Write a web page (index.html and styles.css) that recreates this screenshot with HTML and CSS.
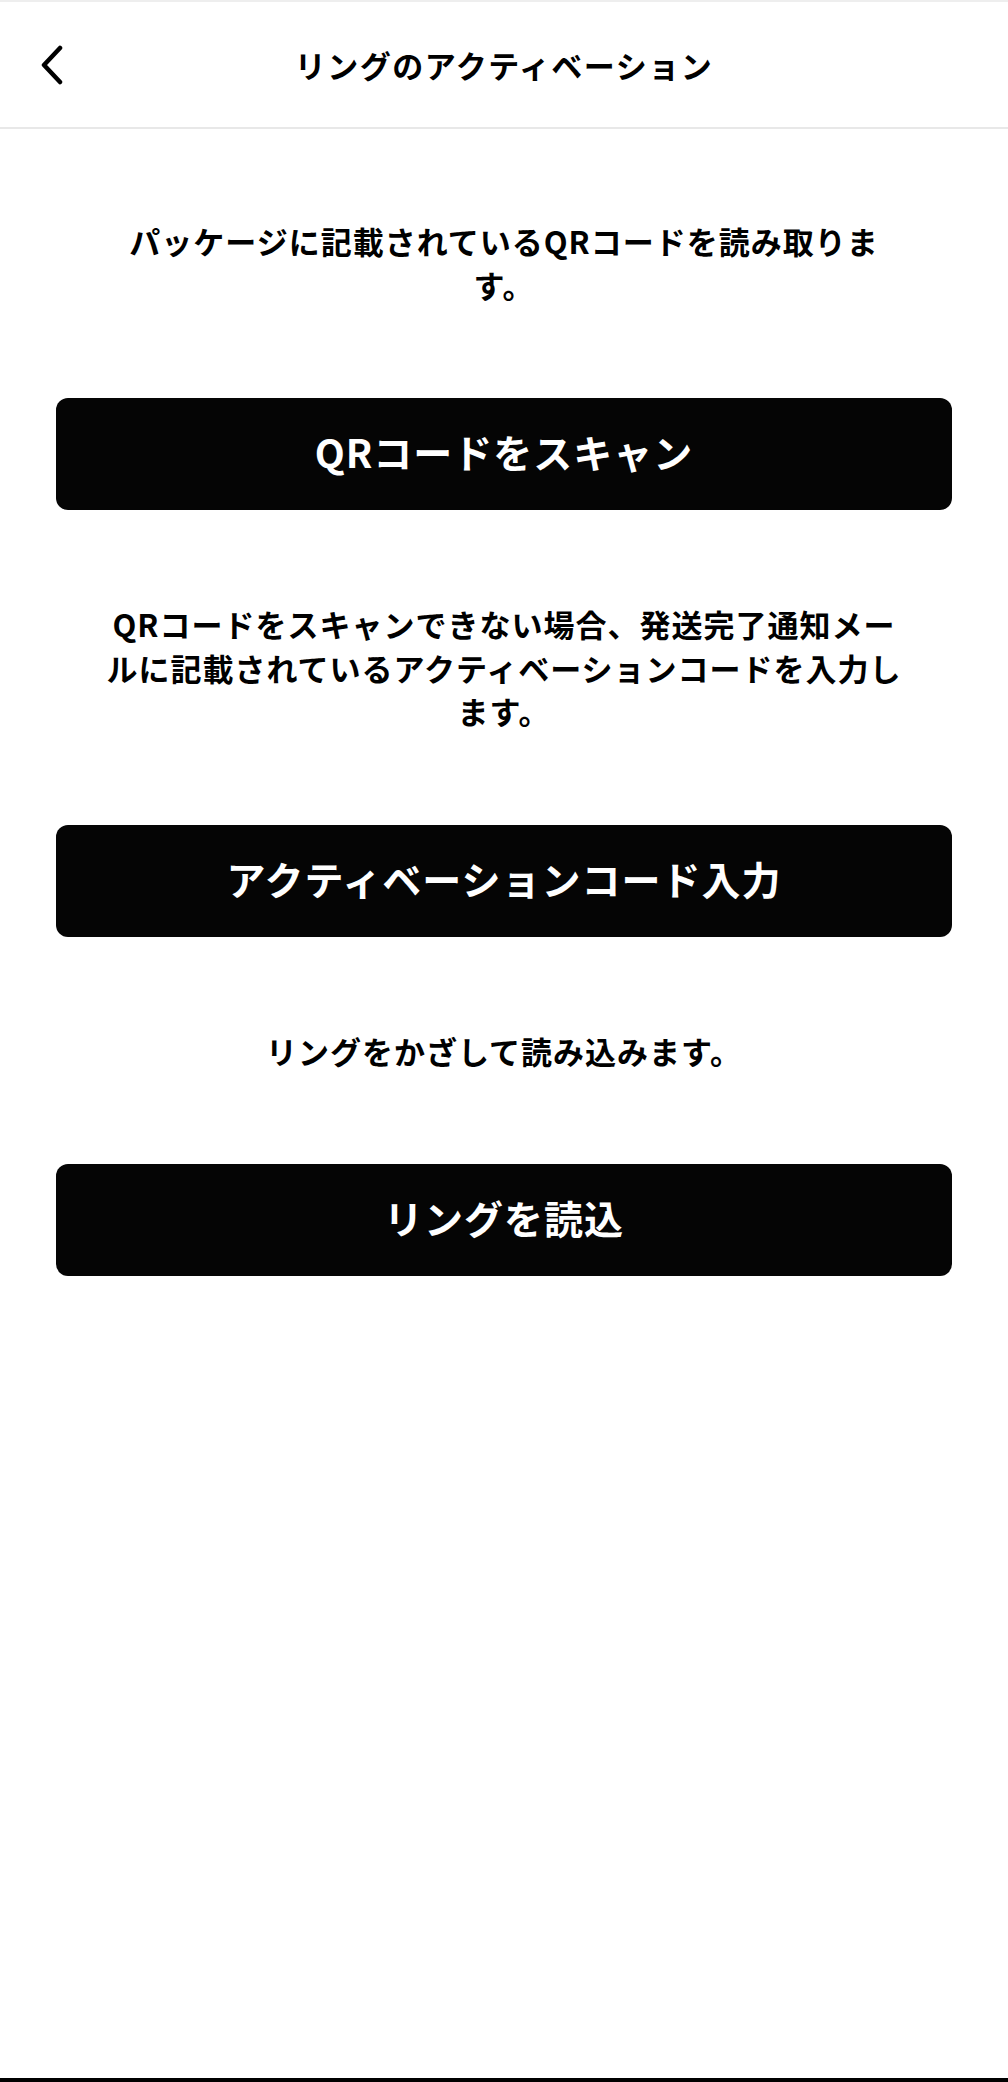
FILE: index.html
```html
<!DOCTYPE html>
<html lang="ja">
<head>
    <meta charset="UTF-8">
    <meta name="viewport" content="width=device-width, initial-scale=1.0">
    <title>リングのアクティベーション</title>
    <link rel="stylesheet" href="styles.css">
</head>
<body>
    <div class="page">
        <header class="header">
            <button class="back-button" aria-label="戻る">
                <svg width="24" height="40" viewBox="0 0 24 40">
                    <polyline points="20,3 4,20 20,37" fill="none" stroke="#000" stroke-width="4.5" stroke-linecap="round" stroke-linejoin="round"/>
                </svg>
            </button>
            <h1 class="title">リングのアクティベーション</h1>
            <span></span>
        </header>

        <main class="content">
            <p class="note">パッケージに記載されているQRコードを読み取ります。</p>
            <button class="action">QRコードをスキャン</button>

            <p class="note">QRコードをスキャンできない場合、発送完了通知メールに記載されているアクティベーションコードを入力します。</p>
            <button class="action">アクティベーションコード入力</button>

            <p class="note">リングをかざして読み込みます。</p>
            <button class="action">リングを読込</button>
        </main>

        <div class="bottom-bar"></div>
    </div>
</body>
</html>
```

FILE: styles.css
```css
/* リング アクティベーション画面 */
html, body {
    margin: 0;
    padding: 0;
}
body {
    font-family: "Noto Sans CJK JP", "Noto Sans", sans-serif;
    background-color: #fff;
    color: #000;
}
.page {
    display: flex;
    flex-direction: column;
    height: 100vh;
}
.header {
    display: grid;
    grid-template-columns: 1fr auto 1fr;
    align-items: center;
    box-sizing: border-box;
    height: 129px;
    border-top: 2px solid #eeeeee;
    border-bottom: 2px solid #e8e8e8;
}
.back-button {
    justify-self: start;
    display: flex;
    align-items: center;
    margin-left: 40px;
    padding: 0;
    border: none;
    background: none;
    cursor: pointer;
}
.title {
    margin: 0;
    font-size: 31px;
    font-weight: 700;
    letter-spacing: 1.5px;
    line-height: 40px;
}
.content {
    flex: 1;
    display: flex;
    flex-direction: column;
    align-items: center;
    gap: 92px;
    padding-top: 90px;
}
.note {
    width: 808px;
    margin: 0;
    font-size: 31px;
    font-weight: 700;
    letter-spacing: 1px;
    line-height: 43.5px;
    text-align: center;
    line-break: strict;
}
.action {
    width: 896px;
    height: 112px;
    padding: 0 0 6px;
    border: none;
    border-radius: 12px;
    background-color: #050505;
    color: #fff;
    font-family: inherit;
    font-size: 39px;
    font-weight: 700;
    letter-spacing: 1px;
    cursor: pointer;
}
.bottom-bar {
    height: 4px;
    background-color: #000;
}
```
